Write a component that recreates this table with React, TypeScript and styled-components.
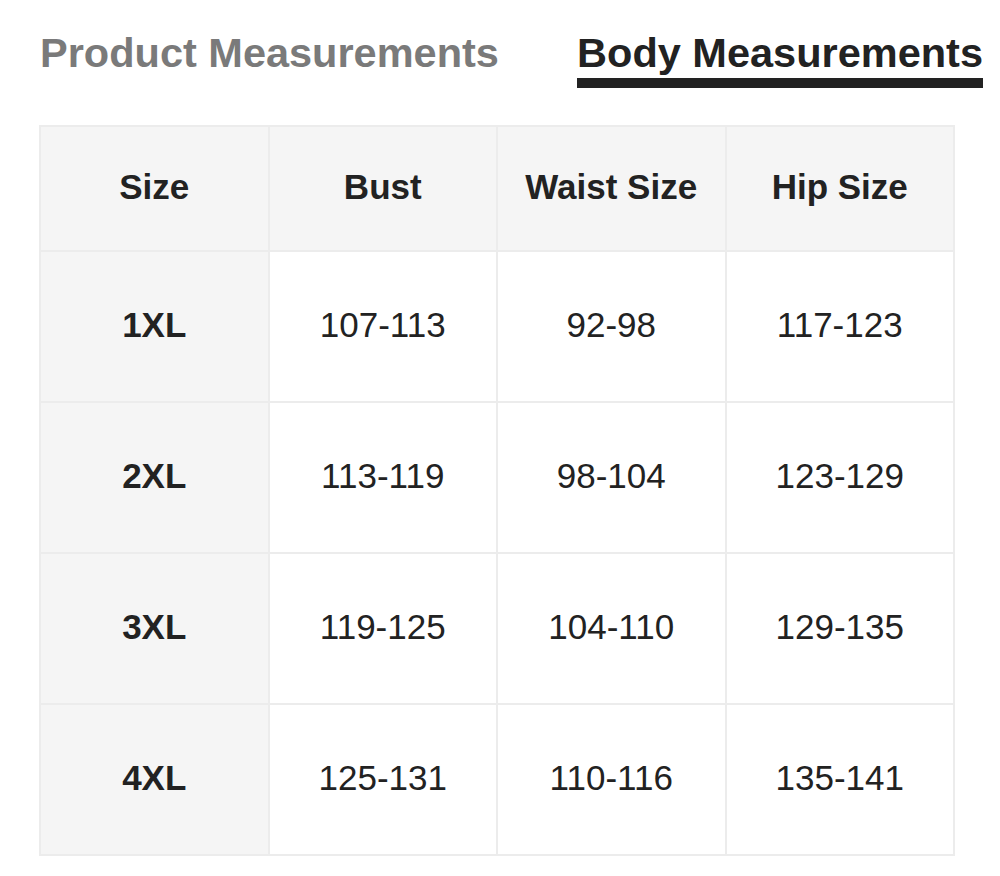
import React from "react";
import styled, { createGlobalStyle } from "styled-components";

const Global = createGlobalStyle`
  html, body { margin: 0; padding: 0; background: #ffffff; }
  body { font-family: "Liberation Sans", Arial, sans-serif; }
`;

const Page = styled.div`
  width: 1000px;
  height: 876px;
  box-sizing: border-box;
  padding: 29px 0 0 39px;
  background: #fff;
`;

const Tabs = styled.div`
  display: flex;
  justify-content: space-between;
  align-items: flex-start;
  width: 944px;
  padding-left: 1px;
  box-sizing: border-box;
`;

const Tab = styled.div<{ $active?: boolean }>`
  font-size: 41.5px;
  font-weight: 700;
  line-height: 47px;
  color: ${(p) => (p.$active ? "#222222" : "#7a7a7a")};
  padding-bottom: 2px;
  border-bottom: 10px solid ${(p) => (p.$active ? "#222222" : "transparent")};
  white-space: nowrap;
`;

const Table = styled.div`
  margin-top: 37px;
  width: 916px;
  display: grid;
  grid-template-columns: repeat(4, 1fr);
  grid-template-rows: 125px repeat(4, 151px);
  border-top: 2px solid #ececec;
  border-left: 2px solid #ececec;
  box-sizing: border-box;
`;

const Cell = styled.div<{ $shade?: boolean; $bold?: boolean }>`
  display: flex;
  align-items: center;
  justify-content: center;
  padding-bottom: 3px;
  border-right: 2px solid #ececec;
  border-bottom: 2px solid #ececec;
  background: ${(p) => (p.$shade ? "#f5f5f5" : "#ffffff")};
  font-size: 35px;
  font-weight: ${(p) => (p.$bold ? 700 : 400)};
  color: #222222;
`;

const headers = ["Size", "Bust", "Waist Size", "Hip Size"];
const rows = [
  ["1XL", "107-113", "92-98", "117-123"],
  ["2XL", "113-119", "98-104", "123-129"],
  ["3XL", "119-125", "104-110", "129-135"],
  ["4XL", "125-131", "110-116", "135-141"],
];

export default function App() {
  return (
    <>
      <Global />
      <Page>
        <Tabs>
          <Tab>Product Measurements</Tab>
          <Tab $active>Body Measurements</Tab>
        </Tabs>
        <Table>
          {headers.map((h) => (
            <Cell key={h} $shade $bold>
              {h}
            </Cell>
          ))}
          {rows.map((r) =>
            r.map((v, i) => (
              <Cell key={r[0] + i} $shade={i === 0} $bold={i === 0}>
                {v}
              </Cell>
            ))
          )}
        </Table>
      </Page>
    </>
  );
}
